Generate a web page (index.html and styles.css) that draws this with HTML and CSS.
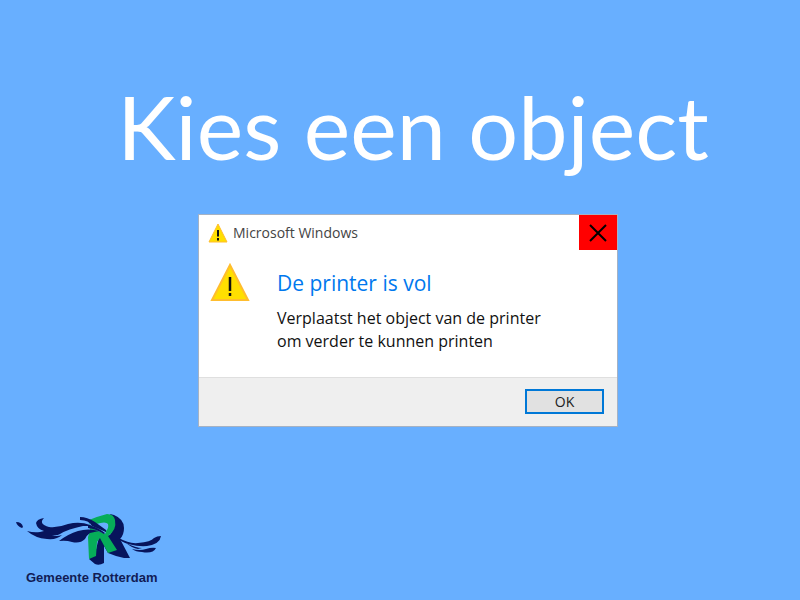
FILE: index.html
```html
<!DOCTYPE html>
<html lang="nl">
<head>
<meta charset="utf-8">
<meta name="viewport" content="width=device-width, initial-scale=1">
<title>Kies een object</title>
<link rel="stylesheet" href="styles.css">
</head>
<body>
<main class="screen">
  <h1 class="title">Kies een object</h1>
  <section class="dialog" role="dialog" aria-labelledby="dialog-name">
    <header class="titlebar">
      <svg class="icon-small" viewBox="0 0 40 40" aria-hidden="true"><path d="M20 2 38 38H2Z" fill="#ffdf00" stroke="#ffbd2e" stroke-width="2"/><path d="M20 14V27M20 30V35" stroke="#111" stroke-width="4"/></svg>
      <span class="app-name" id="dialog-name">Microsoft Windows</span>
      <button class="close" type="button" aria-label="Sluiten">
        <svg viewBox="0 0 18 18" aria-hidden="true"><path d="M1 1 17 17M17 1 1 17" stroke="#000" stroke-width="2"/></svg>
      </button>
    </header>
    <div class="content">
      <svg class="icon-large" viewBox="0 0 40 40" aria-hidden="true"><path d="M20 3 38 38H2Z" fill="#ffdf00" stroke="#ffbd2e" stroke-width="2"/><path d="M20 15V29M20 31V34" stroke="#111" stroke-width="2.500"/></svg>
      <div class="message">
        <h2 class="heading">De printer is vol</h2>
        <p class="text">Verplaatst het object van de printer<br>om verder te kunnen printen</p>
      </div>
    </div>
    <footer class="actions"><button class="ok" type="button">OK</button></footer>
  </section>
  <div class="brand">
    <svg class="logo" viewBox="0 0 162 64" aria-hidden="true">
      <path fill="#07145c" d="M102 8 106 9Q116 13 116 22 116 29 112 33L122 52 116 52 108 50 100 47 96 40 96 57Q91 60 87 58L81 53 87 48 91 31 102 29 107 18Z"/>
      <path fill="#06ad59" fill-rule="evenodd" d="M81 14Q91 10 99 8 106 8 107 14 109 24 100 30L109 44 100 47 93 34 92 32 89 36 88 50 81 53 80 31 82 25Z M88 18 98 25Q101 22 100 18 98 15 88 18Z"/>
      <path fill="#68afff" d="M82 16 98 26 97 28 81 21Z"/>
      <g fill="#07145c">
        <path d="M8 16Q14 16 15 21L14 22Q9 20 8 16Z"/>
        <path d="M19 25Q26 27 32 26L36 25Q29 23 28 17 29 13 36 12 30 18 41 21 50 22 60 18 72 15 82 19L84 20 75 20Q60 23 52 28 49 30 44 29 48 31 54 29 49 34 39 33 27 32 19 25Z"/>
        <path d="M51 35Q60 28 70 25 80 22 91 25L82 27Q79 29 77 33 72 38 64 36 58 34 51 35Z"/>
        <path d="M72 11Q79 11 87 16L98 24 98 26 84 20Q81 14 72 14Z"/>
        <path d="M80 19Q88 20 97 27L96 28Q88 23 80 22Z"/>
        <path d="M111 32Q121 38 130 37 143 36 146 32 149 30 153 30 152 38 139 40 123 41 111 34Z"/>
        <path d="M124 43Q132 45 138 43 144 41 148 42 145 48 134 46 128 46 124 43ZM118 37Q128 42 134 42L130 43Q124 42 118 37Z"/>
      </g>
    </svg>
    <span class="brand-name">Gemeente Rotterdam</span>
  </div>
</main>
</body>
</html>
```
FILE: styles.css
```css
* { box-sizing: border-box; }
body { margin: 0; background: #68afff; font-family: "Open Sans", "Noto Sans", sans-serif; }
.screen { min-height: 100vh; display: flex; flex-direction: column; padding: 76px 8px 14px; }
.title { margin: 0 0 38px 26px; text-align: center; color: #fff; font: 400 88px/100px Lato, sans-serif; }
.dialog { width: 420px; max-width: 100%; margin: 0 auto 0 190px; background: #fff; border: 1px solid #a5b2c4; }
.titlebar { display: flex; align-items: center; height: 35px; padding-left: 9px; gap: 5px; }
.icon-small { width: 20px; height: 20px; }
.app-name { flex: 1; color: #444; font-size: 14px; line-height: 20px; }
.close { display: grid; place-items: center; width: 38px; height: 35px; padding: 0; border: 0; background: #f00; }
.close svg { width: 18px; height: 18px; }
.content { display: flex; gap: 27px; padding: 12px 11px 24px; }
.icon-large { width: 40px; height: 40px; }
.heading { margin: 9px 0 12px; color: #0078ee; font-size: 21px; line-height: 24px; font-weight: 400; }
.text { margin: 0; font-size: 16px; line-height: 23px; color: #111; }
.actions { display: flex; justify-content: flex-end; padding: 11px 13px 12px; background: #efefef; border-top: 1px solid #dfdfdf; }
.ok { width: 79px; height: 25px; padding: 0; border: 2px solid #0078d7; background: #e1e1e1; color: #222; font: 14px/20px "Open Sans", sans-serif; }
.brand { display: flex; flex-direction: column; width: 162px; margin-top: auto; }
.logo { width: 162px; height: 64px; }
.brand-name { padding-left: 18px; color: #111c55; font: 700 13px/16px "Liberation Sans", sans-serif; white-space: nowrap; }
```
